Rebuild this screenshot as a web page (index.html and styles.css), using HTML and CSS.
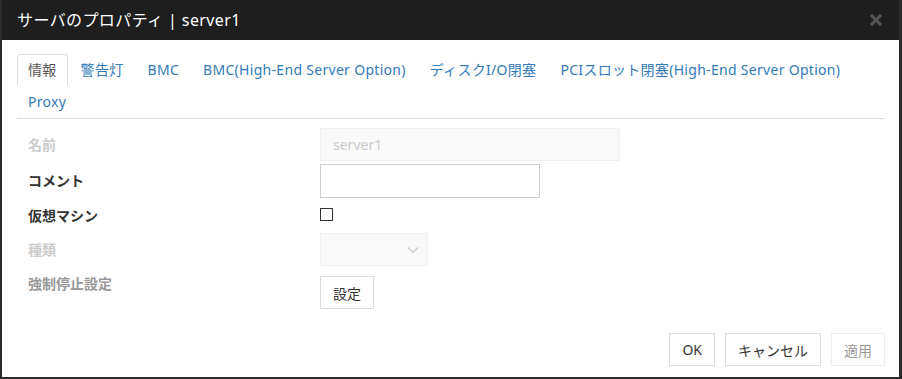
FILE: index.html
```html
<!DOCTYPE html>
<html lang="ja">
<head>
    <meta charset="UTF-8">
    <title>サーバのプロパティ | server1</title>
    <link rel="stylesheet" href="styles.css">
</head>
<body>
    <div class="dialog">
        <div class="dialog-header">
            <h4 class="dialog-title">サーバのプロパティ | server1</h4>
            <svg class="close" width="14" height="14" viewBox="0 0 14 14"><path d="M2 2 12 12M12 2 2 12" stroke="#555" stroke-width="3"/></svg>
        </div>
        <div class="dialog-body">
            <ul class="tabs">
                <li class="active"><a>情報</a></li>
                <li><a>警告灯</a></li>
                <li><a>BMC</a></li>
                <li><a>BMC(High-End Server Option)</a></li>
                <li><a>ディスクI/O閉塞</a></li>
                <li><a>PCIスロット閉塞(High-End Server Option)</a></li>
                <li><a>Proxy</a></li>
            </ul>
            <div class="form">
                <div class="row">
                    <label class="disabled">名前</label>
                    <input type="text" class="field name" value="server1" disabled>
                </div>
                <div class="row">
                    <label>コメント</label>
                    <input type="text" class="field comment">
                </div>
                <div class="row check-row">
                    <label>仮想マシン</label>
                    <span class="checkbox"></span>
                </div>
                <div class="row">
                    <label class="disabled">種類</label>
                    <div class="select">
                        <svg width="12" height="8" viewBox="0 0 12 8"><path d="M1 1.5 6 6.5 11 1.5" fill="none" stroke="#ccc" stroke-width="1.2"/></svg>
                    </div>
                </div>
                <div class="row last-row">
                    <label class="muted">強制停止設定</label>
                    <button class="btn">設定</button>
                </div>
            </div>
        </div>
        <div class="dialog-footer">
            <button class="btn">OK</button>
            <button class="btn">キャンセル</button>
            <button class="btn" disabled>適用</button>
        </div>
    </div>
</body>
</html>
```

FILE: styles.css
```css
html, body {
    margin: 0;
    height: 100%;
}
body {
    background-color: #2b2b2b;
    font-family: "Noto Sans", "Noto Sans CJK JP", sans-serif;
    font-size: 14px;
    line-height: 20px;
    color: #333;
}
.dialog {
    background: #fff;
    margin-left: 2px;
    width: 897px;
    height: 377px;
    display: flex;
    flex-direction: column;
}
.dialog-header {
    background-color: #1e1e1e;
    height: 40px;
    display: flex;
    align-items: center;
    justify-content: space-between;
    padding: 0 16px 0 15px;
}
.dialog-title {
    margin: 0;
    color: #fff;
    font-size: 16px;
    font-weight: normal;
    line-height: 22px;
    letter-spacing: 0.4px;
}
.dialog-body {
    padding: 14px 14px 0 15px;
    flex: 1;
}
.tabs {
    list-style: none;
    margin: 0;
    padding: 0;
    display: flex;
    flex-wrap: wrap;
    border-bottom: 1px solid #ddd;
}
.tabs li {
    margin-right: 2px;
}
.tabs a {
    display: block;
    padding: 5px 10px;
    border: 1px solid transparent;
    color: #337ab7;
    white-space: nowrap;
    letter-spacing: 0.3px;
}
.tabs .active a {
    color: #555;
    border-color: #ddd #ddd transparent;
    border-radius: 3px 3px 0 0;
}
.form {
    padding: 9px 0 0 11px;
}
.row {
    display: grid;
    grid-template-columns: 292px auto;
    align-items: center;
    justify-items: start;
}
.row + .row {
    margin-top: 3px;
}
.row label {
    font-weight: bold;
    color: #333;
}
.row label.disabled {
    color: #ccc;
}
.row label.muted {
    color: #999;
}
.field {
    box-sizing: border-box;
    height: 34px;
    border: 1px solid #ccc;
    padding: 0 12px;
    font-family: inherit;
    font-size: 14px;
    margin: 0;
}
.field.name {
    width: 300px;
    height: 33px;
    background: #f9f9f9;
    border-color: #f0f0f0;
    color: #ccc;
}
.field.comment {
    width: 220px;
}
.check-row {
    height: 32px;
    margin-top: 0 !important;
}
.check-row label {
    padding-top: 4px;
}
.checkbox {
    width: 11px;
    height: 11px;
    border: 1px solid #333;
}
.select {
    box-sizing: border-box;
    width: 108px;
    height: 33px;
    background: #f9f9f9;
    border: 1px solid #f0f0f0;
    display: flex;
    align-items: center;
    justify-content: flex-end;
    padding-right: 8px;
}
.last-row {
    align-items: start;
    margin-top: 8px !important;
}
.last-row .btn {
    margin-top: 2px;
}
.btn {
    box-sizing: border-box;
    height: 33px;
    padding: 0 12px;
    background: #fff;
    border: 1px solid #ddd;
    color: #333;
    font-family: inherit;
    font-size: 14px;
    cursor: pointer;
}
.btn:disabled {
    color: #999;
    border-color: #eee;
}
.dialog-footer {
    display: flex;
    justify-content: flex-end;
    gap: 10px;
    padding: 0 14px 11px 0;
}
```
